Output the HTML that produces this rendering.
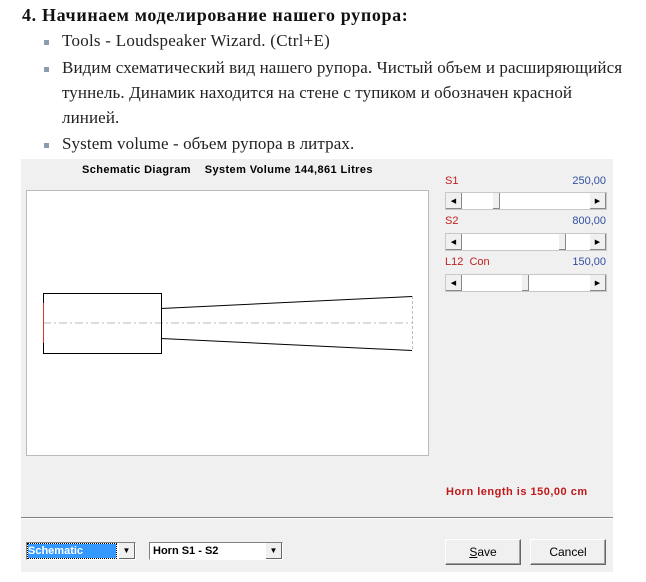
<!DOCTYPE html>
<html><head><meta charset="utf-8"><style>
body{margin:0;width:646px;height:582px;background:#fff;position:relative;overflow:hidden;font-family:"Liberation Serif",serif;}
.a{position:absolute;white-space:nowrap}
.t{font-size:17px;letter-spacing:0.1px;color:#222}
.b{position:absolute;width:5px;height:5px;background:#8b9bb2}
.ms{font-family:"Liberation Sans",sans-serif;font-size:11px}
.sb{position:absolute;left:445px;width:162px;height:18px;background:#fff;border:1px solid #c8c8c8;box-sizing:border-box}
.ar{position:absolute;top:0;width:16px;height:16px;background:#f0f0f0;border-right:1px solid #888;border-bottom:1px solid #888;box-sizing:border-box;font-size:7px;line-height:16px;text-align:center;color:#000}
.th{position:absolute;top:0;width:7px;height:16px;background:#f0f0f0;border-right:1px solid #888;border-bottom:1px solid #888;box-sizing:border-box}
.btn{position:absolute;top:539px;width:76px;height:26px;background:#f0f0f0;border:1px solid;border-color:#fff #666 #666 #fff;box-sizing:border-box;font-family:"Liberation Sans",sans-serif;font-size:12px;text-align:center;line-height:24px;box-shadow:inset -1px -1px 0 #a0a0a0}
.cb{position:absolute;top:542px;height:18px;background:#fff;border:1px solid;border-color:#808080 #fff #fff #808080;box-sizing:border-box}
.dd{position:absolute;right:0;top:0;width:16px;height:16px;background:#f0f0f0;border-right:1px solid #666;border-bottom:1px solid #666;box-sizing:border-box;font-size:8px;text-align:center;line-height:16px}
</style></head><body>
<div class="a t" style="left:22px;top:5px;font-weight:bold;font-size:18px;letter-spacing:0.65px;color:#111">4. Начинаем моделирование нашего рупора:</div>
<div class="b" style="left:44px;top:40px"></div>
<div class="a t" style="left:62px;top:31px;letter-spacing:0.25px">Tools - Loudspeaker Wizard. (Ctrl+E)</div>
<div class="b" style="left:44px;top:67px"></div>
<div class="a t" style="left:62px;top:58px">Видим схематический вид нашего рупора. Чистый объем и расширяющийся</div>
<div class="a t" style="left:62px;top:83px">туннель. Динамик находится на стене с тупиком и обозначен красной</div>
<div class="a t" style="left:62px;top:108px">линией.</div>
<div class="b" style="left:44px;top:143px"></div>
<div class="a t" style="left:62px;top:134px">System volume - объем рупора в литрах.</div>

<div class="a" style="left:21px;top:159px;width:592px;height:413px;background:#f0f0f0"></div>
<div class="a ms" style="left:82px;top:164px;font-weight:bold;letter-spacing:0.4px">Schematic Diagram&nbsp;&nbsp;&nbsp; System Volume 144,861 Litres</div>
<div class="a" style="left:26px;top:190px;width:403px;height:266px;background:#fff;border:1px solid #bbb;box-sizing:border-box"></div>
<svg class="a" style="left:0;top:0" width="646" height="582">
<line x1="43" y1="323" x2="412" y2="323" stroke="#bbb" stroke-dasharray="8,3,2,3"/>
<line x1="161.5" y1="308" x2="161.5" y2="338" stroke="#bbb" stroke-dasharray="3,2"/>
<line x1="412.5" y1="296" x2="412.5" y2="350" stroke="#bbb" stroke-dasharray="3,2"/>
<rect x="43.5" y="293.5" width="118" height="60" fill="none" stroke="#000"/>
<line x1="43.5" y1="303" x2="43.5" y2="343" stroke="#e03030"/>
<line x1="161" y1="308.5" x2="412" y2="296.5" stroke="#000"/>
<line x1="161" y1="338.5" x2="412" y2="350.5" stroke="#000"/>
</svg>

<div class="a ms" style="left:445px;top:175px;color:#c02020">S1</div>
<div class="a ms" style="left:560px;top:175px;width:46px;text-align:right;color:#3050a0">250,00</div>
<div class="sb" style="top:192px"><div class="ar" style="left:0">◀</div><div class="th" style="left:47px"></div><div class="ar" style="right:0">▶</div></div>
<div class="a ms" style="left:445px;top:215px;color:#c02020">S2</div>
<div class="a ms" style="left:560px;top:215px;width:46px;text-align:right;color:#3050a0">800,00</div>
<div class="sb" style="top:233px"><div class="ar" style="left:0">◀</div><div class="th" style="left:113px"></div><div class="ar" style="right:0">▶</div></div>
<div class="a ms" style="left:445px;top:256px;color:#c02020">L12&nbsp; Con</div>
<div class="a ms" style="left:560px;top:256px;width:46px;text-align:right;color:#3050a0">150,00</div>
<div class="sb" style="top:274px"><div class="ar" style="left:0">◀</div><div class="th" style="left:76px"></div><div class="ar" style="right:0">▶</div></div>

<div class="a ms" style="left:446px;top:486px;font-weight:bold;letter-spacing:0.5px;color:#c01818">Horn length is 150,00 cm</div>
<div class="a" style="left:21px;top:517px;width:592px;height:1px;background:#808080"></div>
<div class="a" style="left:21px;top:518px;width:592px;height:1px;background:#fff"></div>

<div class="cb" style="left:26px;width:110px"><div class="a ms" style="left:1px;top:1px;width:88px;height:14px;background:#3399ff;color:#fff;font-weight:bold;line-height:14px;outline:1px dotted #000">Schematic</div><div class="dd">▼</div></div>
<div class="cb" style="left:149px;width:134px"><div class="a ms" style="left:3px;top:1px;font-weight:bold;line-height:14px">Horn S1 - S2</div><div class="dd">▼</div></div>
<div class="btn" style="left:445px"><u>S</u>ave</div>
<div class="btn" style="left:530px">Cancel</div>
</body></html>
